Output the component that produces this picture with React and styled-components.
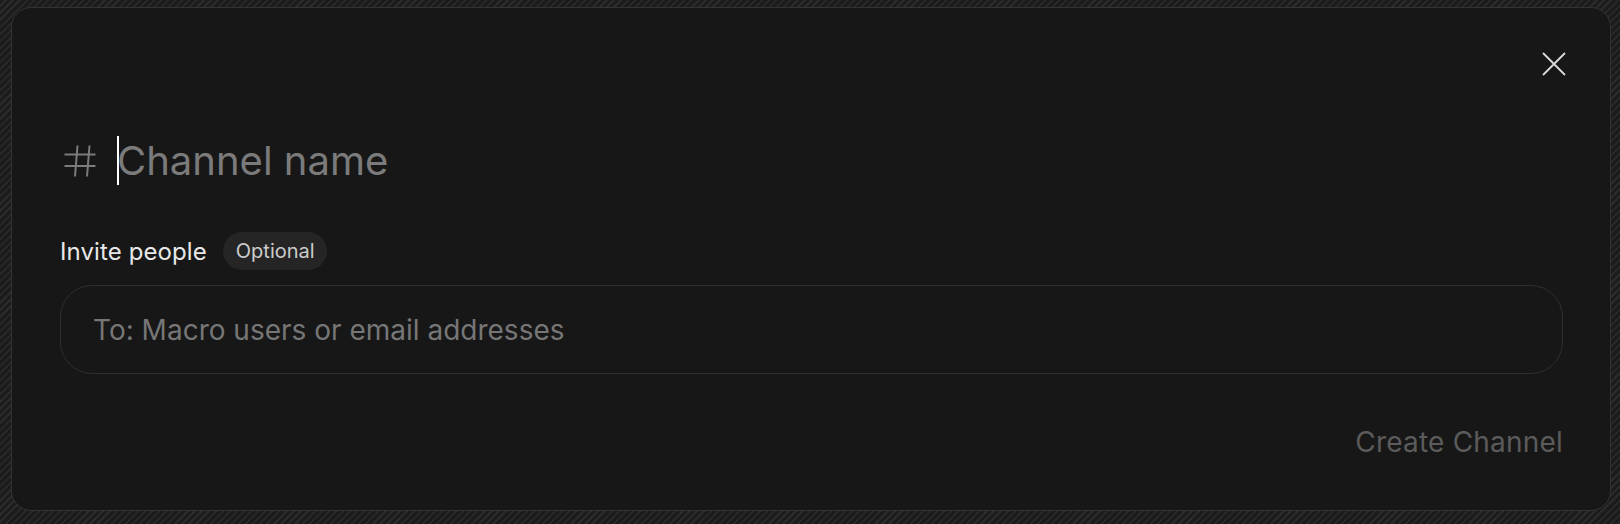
import React from 'react';
import styled, { createGlobalStyle } from 'styled-components';

const GlobalStyle = createGlobalStyle`
    html, body {
        margin: 0;
        padding: 0;
        background: repeating-linear-gradient(
            135deg,
            #1c1c1c 0px,
            #1c1c1c 3.4px,
            #2b2b2b 3.4px,
            #2b2b2b 5px
        );
        font-family: Inter, "Noto Sans", sans-serif;
    }
    * {
        box-sizing: border-box;
    }
`;

const Page = styled.div`
    height: 524px;
    padding: 7px 9px 13px 11px;
`;

const Panel = styled.div`
    height: 100%;
    display: flex;
    flex-direction: column;
    background: #171717;
    border: 1px solid #333333;
    border-radius: 20px;
    padding: 44px 47px 51px 48px;
`;

const Header = styled.div`
    display: flex;
    justify-content: flex-end;
    margin-right: -3px;
`;

const CloseButton = styled.button`
    width: 24px;
    height: 24px;
    padding: 0;
    border: none;
    background: none;
    cursor: pointer;
    display: flex;
`;

const NameRow = styled.div`
    display: flex;
    align-items: center;
    height: 49px;
    margin-top: 60px;
    padding-left: 4px;
`;

const HashIcon = styled.svg`
    width: 32px;
    height: 32px;
    flex: none;
    margin-right: 21px;
`;

const Caret = styled.span`
    width: 2px;
    height: 49px;
    background: #ffffff;
    flex: none;
`;

const NameInput = styled.input`
    flex: 1;
    height: 49px;
    padding: 0;
    margin-left: -2px;
    border: none;
    outline: none;
    background: transparent;
    font-family: Inter, sans-serif;
    font-size: 40px;
    color: #e6e6e6;

    &::placeholder {
        color: #7b7b7b;
    }
`;

const LabelRow = styled.div`
    display: flex;
    align-items: center;
    gap: 16px;
    height: 38px;
    margin-top: 47px;
`;

const Label = styled.span`
    font-size: 24px;
    letter-spacing: 0.1px;
    color: #e8e8e8;
`;

const Pill = styled.span`
    display: inline-flex;
    align-items: center;
    height: 38px;
    padding: 0 12px 0 13px;
    border-radius: 19px;
    background: #252525;
    font-size: 20px;
    color: #cccccc;
`;

const InviteBox = styled.div`
    height: 89px;
    margin-top: 15px;
    border: 1px solid #2f2f2f;
    border-radius: 32px;
    display: flex;
    align-items: center;
    padding: 0 32px;
`;

const InviteInput = styled.input`
    flex: 1;
    padding: 0;
    border: none;
    outline: none;
    background: transparent;
    font-family: Inter, sans-serif;
    font-size: 28px;
    color: #e6e6e6;

    &::placeholder {
        color: #767676;
    }
`;

const Footer = styled.div`
    display: flex;
    justify-content: flex-end;
    margin-top: 51px;
`;

const CreateButton = styled.button`
    padding: 0;
    border: none;
    background: none;
    font-family: Inter, sans-serif;
    font-size: 28px;
    letter-spacing: 0.2px;
    line-height: 34px;
    color: #5b5b5b;
    cursor: default;
`;

const App = () => {
    return (
        <>
            <GlobalStyle />
            <Page>
                <Panel>
                    <Header>
                        <CloseButton aria-label="Close">
                            <svg width="24" height="24" viewBox="0 0 24 24" fill="none">
                                <path d="M1 1 23 23M23 1 1 23" stroke="#dadada" strokeWidth="1.8" />
                            </svg>
                        </CloseButton>
                    </Header>

                    <NameRow>
                        <HashIcon viewBox="0 0 32 32" fill="none">
                            <path
                                d="M0.5 9.5H31.5M0.5 21H31.5M13.5 0.5 11 31.5M25.5 0.5 23 31.5"
                                stroke="#7b7b7b"
                                strokeWidth="2"
                            />
                        </HashIcon>
                        <Caret />
                        <NameInput placeholder="Channel name" />
                    </NameRow>

                    <LabelRow>
                        <Label>Invite people</Label>
                        <Pill>Optional</Pill>
                    </LabelRow>

                    <InviteBox>
                        <InviteInput placeholder="To: Macro users or email addresses" />
                    </InviteBox>

                    <Footer>
                        <CreateButton>Create Channel</CreateButton>
                    </Footer>
                </Panel>
            </Page>
        </>
    );
};

export default App;
